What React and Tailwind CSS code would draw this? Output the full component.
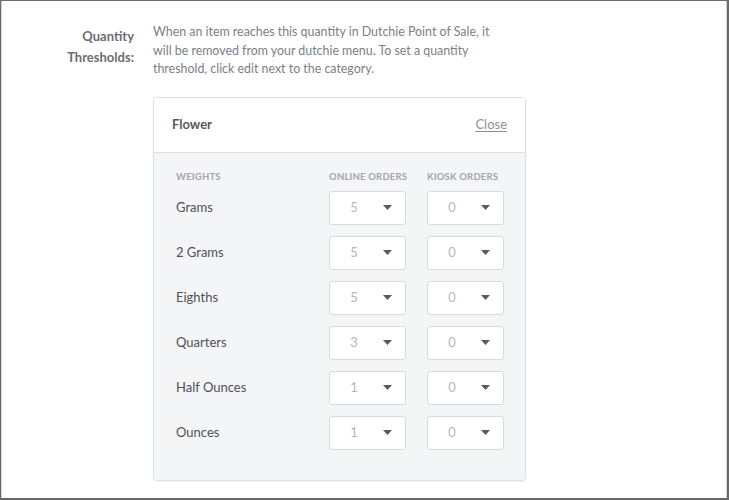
import React from 'react';

const rows = [
  { name: 'Grams', online: 5, kiosk: 0 },
  { name: '2 Grams', online: 5, kiosk: 0 },
  { name: 'Eighths', online: 5, kiosk: 0 },
  { name: 'Quarters', online: 3, kiosk: 0 },
  { name: 'Half Ounces', online: 1, kiosk: 0 },
  { name: 'Ounces', online: 1, kiosk: 0 },
];

function Caret() {
  return (
    <svg width="9" height="5" viewBox="0 0 9 5" className="shrink-0">
      <path d="M0 0h9L4.5 5z" fill="#5a5a5a" />
    </svg>
  );
}

function QtySelect({ value }) {
  return (
    <div className="w-[77px] h-[34px] bg-white border border-[#d7dade] rounded-[3px] flex items-center pl-[20px] pr-[13px] justify-between">
      <span className="w-[8px] text-center text-[13px] text-[#b5b9be]">{value}</span>
      <Caret />
    </div>
  );
}

export default function App() {
  return (
    <div
      className="w-[729px] h-[500px] bg-white border-t border-l border-r-2 border-b-2 border-[#6a6a6a] overflow-hidden"
      style={{ fontFamily: 'Lato, "Open Sans", sans-serif' }}
    >
      <div className="h-full border-l border-r border-[#d3d6da] flex pt-[22px]">
        {/* Label */}
        <div className="w-[132px] shrink-0 text-right text-[13px] font-bold text-[#6b6e73] leading-[21px] pt-[3px]">
          Quantity
          <br />
          Thresholds:
        </div>

        <div className="ml-[19px] w-[374px]">
          <p className="text-[12.4px] leading-[18.5px] text-[#7a7f87] w-[352px]">
            When an item reaches this quantity in Dutchie Point of Sale, it will be removed from your dutchie menu. To set
            a quantity threshold, click edit next to the category.
          </p>

          {/* Card */}
          <div className="mt-[18px] w-[373px] border border-[#dcdfe3] rounded-[4px] overflow-hidden shadow-[0_1px_2px_rgba(0,0,0,0.06)]">
            <div className="h-[55px] bg-white border-b border-[#dcdfe3] flex items-center justify-between pl-[18px] pr-[18px]">
              <span className="text-[13px] font-bold text-[#555a60]">Flower</span>
              <span className="text-[13px] text-[#8c9096] underline underline-offset-2">Close</span>
            </div>
            <div className="bg-[#f4f5f7] pl-[21px] pr-[21px] pt-[19px] pb-[30px]">
              <div className="flex items-center h-[12px] text-[9.5px] font-bold uppercase tracking-[0.2px] text-[#a2a6ac]">
                <div className="flex-1 pl-[1px]">Weights</div>
                <div className="w-[98px]">Online Orders</div>
                <div className="w-[77px]">Kiosk Orders</div>
              </div>
              <div className="mt-[7px] flex flex-col gap-[11px]">
                {rows.map((r) => (
                  <div key={r.name} className="flex items-center h-[34px]">
                    <div className="flex-1 pl-[1px] text-[13px] text-[#4e5257]">{r.name}</div>
                    <QtySelect value={r.online} />
                    <div className="w-[21px]" />
                    <QtySelect value={r.kiosk} />
                  </div>
                ))}
              </div>
            </div>
          </div>
        </div>
      </div>
    </div>
  );
}
